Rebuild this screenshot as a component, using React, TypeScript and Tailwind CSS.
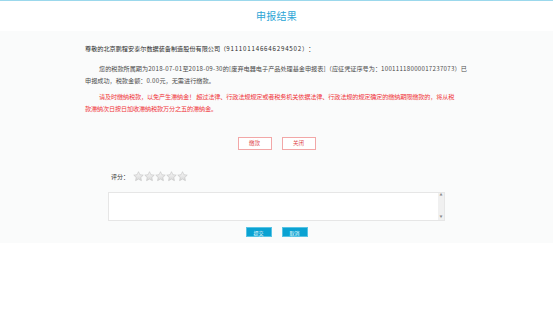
import { useState } from "react";

const font = {
  fontFamily: '"Noto Sans CJK SC", "Liberation Sans", sans-serif',
};

function Star() {
  return (
    <svg width="11" height="11" viewBox="0 0 24 24">
      <defs>
        <linearGradient id="sg" x1="0" y1="0" x2="0" y2="1">
          <stop offset="0" stopColor="#f6f6f6" />
          <stop offset="1" stopColor="#d9d9d9" />
        </linearGradient>
      </defs>
      <path
        d="M12 1.5l3.1 6.6 7.2.9-5.3 5 1.4 7.1L12 17.6l-6.4 3.5L7 14l-5.3-5 7.2-.9z"
        fill="url(#sg)"
        stroke="#bdbdbd"
        strokeWidth="1.2"
        strokeLinejoin="round"
      />
    </svg>
  );
}

function Num({ children }: { children: string }) {
  return <span className="tracking-[0.27px]">{children}</span>;
}

export default function App() {
  const [score, setScore] = useState(0);

  return (
    <div
      className="w-[553px] h-[310px] bg-white border-t border-[#9bd8ec] text-[#333] [text-spacing-trim:space-all]"
      style={font}
    >
      {/* HEADER */}
      <div className="h-[30px] flex items-center justify-center">
        <h1 className="text-[10px] leading-none tracking-[0.3px] text-[#2ba5d6] font-normal">
          申报结果
        </h1>
      </div>

      {/* BODY */}
      <div className="h-[212px] bg-[#fafbfb] pt-[12px]">
        <div className="pl-[85px] w-[500px] text-[6.15px] leading-[12px] whitespace-nowrap">
          <p className="text-[#2a2a2a]">
            尊敬的北京鹏程安泰尔数据装备制造股份有限公司（
            <span className="tracking-[0.8px]">911101146646294502</span>）：
          </p>
          <p className="mt-[8px] text-[#4a4a4a] indent-[14px]">
            您的税款所属期为<Num>2018-07-01</Num>至<Num>2018-09-30</Num>的<Num>[</Num>废弃电器电子产品处理基金申报表<Num>]</Num>（应征凭证序号为：<Num>10011118000017237073</Num>）已
            <br />
            申报成功，税款金额：<Num>0.00</Num>元，无需进行缴款。
          </p>
          <p className="mt-[4px] text-[#f0343a] indent-[14px] tracking-[-0.14px]">
            请及时缴纳税款，以免产生滞纳金！ 超过法律、行政法规规定或者税务机关依据法律、行政法规的规定确定的缴纳期限缴款的，将从税
            <br />
            款滞纳次日按日加收滞纳税款万分之五的滞纳金。
          </p>
        </div>

        <div className="mt-[22px] flex justify-center gap-[10px]">
          <button className="w-[34px] h-[13px] border border-[#f2a7a7] bg-white text-[5.5px] leading-none text-[#e0484c]">
            缴款
          </button>
          <button className="w-[34px] h-[13px] border border-[#f2a7a7] bg-white text-[5.5px] leading-none text-[#e0484c]">
            关闭
          </button>
        </div>

        <div className="mt-[21px] pl-[111px] flex items-center">
          <span className="text-[6px] text-[#333] mr-[4px]">评分：</span>
          <div className="flex">
            {[1, 2, 3, 4, 5].map((i) => (
              <span key={i} onClick={() => setScore(i)} className="cursor-pointer">
                <Star />
              </span>
            ))}
          </div>
          <span className="hidden">{score}</span>
        </div>

        <div className="mt-[10px] ml-[108px] w-[337px] h-[29px] bg-white border border-[#e6e6e6] flex justify-end">
          <div className="w-[6px] h-full bg-[#f0f0f0] flex flex-col justify-between items-center py-[1px] text-[3px] leading-none text-[#888]">
            <span>▲</span>
            <span>▼</span>
          </div>
        </div>

        <div className="mt-[6px] flex justify-center gap-[10px]">
          <button className="w-[26px] h-[10px] bg-[#0aa2d2] border border-[#57c3e4] text-[5px] leading-none text-white">
            提交
          </button>
          <button className="w-[26px] h-[10px] bg-[#0aa2d2] border border-[#57c3e4] text-[5px] leading-none text-white">
            取消
          </button>
        </div>
      </div>
    </div>
  );
}
